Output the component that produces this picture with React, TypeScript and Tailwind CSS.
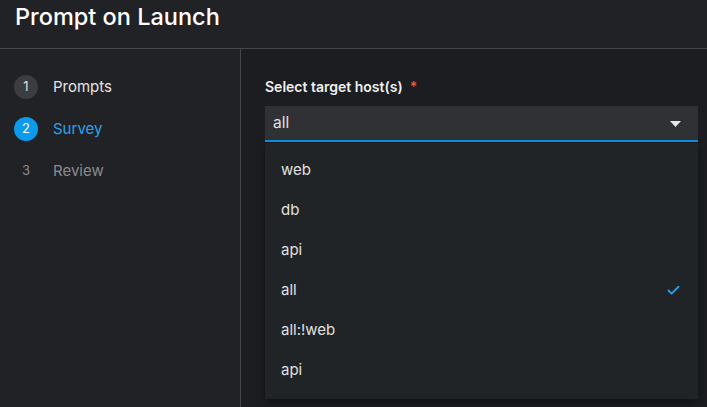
import { Check } from 'lucide-react'

const steps = [
  { n: 1, label: 'Prompts', state: 'done' },
  { n: 2, label: 'Survey', state: 'current' },
  { n: 3, label: 'Review', state: 'todo' },
]

const options = ['web', 'db', 'api', 'all', 'all:!web', 'api']

export default function App() {
  return (
    <div
      className="w-[707px] h-[407px] overflow-hidden bg-[#1b1d21] text-[#e0e0e0] flex flex-col"
      style={{ fontFamily: 'Inter, "Noto Sans", sans-serif' }}
    >
      {/* Header */}
      <div className="h-[49px] shrink-0 bg-[#212226] border-b border-[#45464a] flex items-center px-[15px]">
        <h1 className="text-[23.5px] font-medium text-white -mt-[14px]">Prompt on Launch</h1>
      </div>

      <div className="flex flex-1 min-h-0">
        {/* Wizard nav */}
        <nav className="w-[241px] shrink-0 bg-[#212226] border-r border-[#45464a] pt-[26px] pl-[14px] flex flex-col gap-[18px]">
          {steps.map((s) => (
            <div key={s.n} className="flex items-center h-[24px]">
              <div
                className={
                  s.state === 'current'
                    ? 'w-6 h-6 rounded-full bg-[#0c9aed] text-white flex items-center justify-center text-[13px]'
                    : s.state === 'done'
                      ? 'w-6 h-6 rounded-full bg-[#3c3d41] text-[#e0e0e0] flex items-center justify-center text-[13px]'
                      : 'w-6 h-6 flex items-center justify-center text-[13px] text-[#8a8b8e]'
                }
              >
                {s.n}
              </div>
              <span
                className={
                  'ml-[15px] text-[15px] ' +
                  (s.state === 'current'
                    ? 'text-[#2aa4ee]'
                    : s.state === 'done'
                      ? 'text-[#e4e4e4]'
                      : 'text-[#8a8b8e]')
                }
              >
                {s.label}
              </span>
            </div>
          ))}
        </nav>

        {/* Form */}
        <div className="flex-1 pl-[24px] pr-[9px] pt-[28px]">
          <label className="flex items-center text-[14px] font-semibold text-[#f0f0f0] h-[18px]">
            Select target host(s)
            <span className="ml-[7px] text-[#f0533f]">*</span>
          </label>
          <div className="mt-[11px] h-[36px] bg-[#303135] border-b-2 border-[#0d8fe0] flex items-center justify-between pl-[8px] pr-[17px]">
            <span className="text-[15.5px] text-[#e0e0e0]">all</span>
            <svg width="11" height="6" viewBox="0 0 11 6" className="mt-[1px]">
              <path d="M0 0 L11 0 L5.5 6 Z" fill="#e6e6e6" />
            </svg>
          </div>
          <ul className="mt-px bg-[#212427] pt-[7px] pb-[9px] shadow-[0_4px_8px_rgba(0,0,0,0.4)]">
            {options.map((o, i) => (
              <li key={i} className="h-10 flex items-center justify-between pl-4 pr-[17px] text-[15px] text-[#e0e0e0]">
                <span>{o}</span>
                {i === 3 && <Check className="w-[15px] h-[15px] text-[#1a9ef0]" strokeWidth={3.2} />}
              </li>
            ))}
          </ul>
        </div>
      </div>
    </div>
  )
}
